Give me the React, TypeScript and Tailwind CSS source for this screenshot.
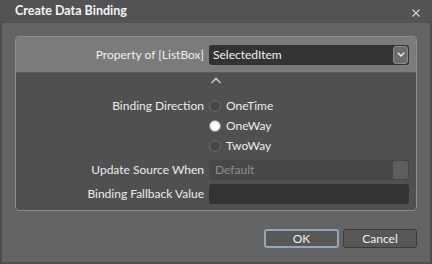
import React from "react";

const Radio = ({ label, checked }: { label: string; checked?: boolean }) => (
  <div className="flex h-[20px] items-center gap-[5px]">
    <span
      className={`flex h-[12px] w-[12px] items-center justify-center rounded-full border ${
        checked ? "border-[#8c8c8c] bg-[#f2f2f2]" : "border-[#6a6a6a] bg-[#474747]"
      }`}
    >
      {checked && <span className="h-[6px] w-[6px] rounded-full bg-white" />}
    </span>
    <span className="text-[#ececec]">{label}</span>
  </div>
);

const App = () => {
  return (
    <div
      className="flex h-[264px] w-[432px] flex-col bg-[#4e4e4e] text-[12px] leading-none"
      style={{ fontFamily: 'Lato, "Open Sans", sans-serif' }}
    >
      <div className="flex h-[23px] items-center justify-between bg-[#535353] pl-[15px] pr-[12px]">
        <span className="text-[12.5px] font-bold text-[#f4f4f4]">Create Data Binding</span>
        <svg width="8" height="8" viewBox="0 0 8 8" className="mt-[2px]">
          <path d="M0.5 0.5 L7.5 7.5 M7.5 0.5 L0.5 7.5" stroke="#d0d0d0" strokeWidth="1.2" />
        </svg>
      </div>

      <div className="mx-[2px] mb-[2px] flex flex-1 flex-col bg-[#646464] pl-[13px] pr-[13px] pt-[13px]">
        <div className="w-[402px] overflow-hidden rounded-[4px] border border-[#8e8e8e] bg-[#505050]">
          <div className="grid h-[36px] grid-cols-[188px_200px] items-center gap-x-[5px] border-b border-[#5a5a5a] bg-[#7b7b7b]">
            <span className="text-right text-[#f0f0f0]">Property of [ListBox]</span>
            <div className="flex h-[20px] items-center justify-between rounded-[3px] bg-[#333333] pl-[4px] pr-[1px]">
              <span className="text-[#f2f2f2]">SelectedItem</span>
              <span className="flex h-[18px] w-[15px] items-center justify-center rounded-[3px] border border-[#8a8a8a] bg-[#6c6c6c]">
                <svg width="8" height="5" viewBox="0 0 8 5">
                  <path d="M0.8 0.8 L4 4 L7.2 0.8" stroke="#f0f0f0" strokeWidth="1.4" fill="none" />
                </svg>
              </span>
            </div>
          </div>

          <div className="grid grid-cols-[188px_200px] gap-x-[5px]">
            <div />
            <div className="mt-[4px] flex h-[7px] items-start pl-[1px]">
              <svg width="12" height="7" viewBox="0 0 12 7">
                <path d="M1.5 6 L6 1.5 L10.5 6" stroke="#c8c8c8" strokeWidth="1.6" fill="none" />
              </svg>
            </div>

            <span className="mt-[12px] flex h-[20px] items-center justify-end text-[#ececec]">Binding Direction</span>
            <div className="mt-[12px] flex flex-col">
              <Radio label="OneTime" />
              <Radio label="OneWay" checked />
              <Radio label="TwoWay" />
            </div>

            <span className="mt-[4px] flex h-[20px] items-center justify-end text-[#ececec]">Update Source When</span>
            <div className="mt-[4px] flex h-[20px] items-center justify-between rounded-[3px] bg-[#474747] pl-[6px] pr-[1px]">
              <span className="text-[#8e8e8e]">Default</span>
              <span className="h-[18px] w-[15px] rounded-[3px] bg-[#5e5e5e]" />
            </div>

            <span className="mt-[4px] flex h-[20px] items-center justify-end text-[#ececec]">Binding Fallback Value</span>
            <div className="mt-[4px] h-[20px] rounded-[3px] bg-[#333333]" />
          </div>
          <div className="h-[6px]" />
        </div>

        <div className="mt-[18px] flex w-[402px] justify-end gap-[4px]">
          <button className="h-[19px] w-[75px] rounded-[3px] border-2 border-[#94a6bb] bg-[#575757] text-[#f0f0f0]">
            OK
          </button>
          <button className="h-[19px] w-[74px] rounded-[3px] border border-[#3c3c3c] bg-[#575757] text-[#f0f0f0]">
            Cancel
          </button>
        </div>
      </div>
    </div>
  );
};

export default App;
